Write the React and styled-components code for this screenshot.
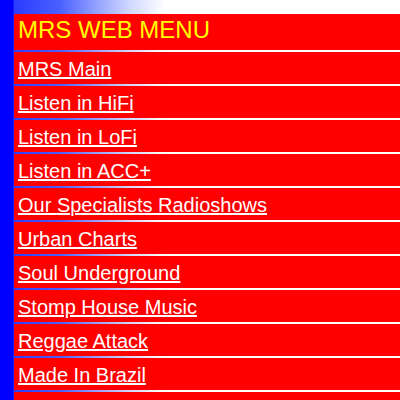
import React from "react";
import styled, { createGlobalStyle } from "styled-components";

const GlobalStyle = createGlobalStyle`
  html, body {
    margin: 0;
    padding: 0;
    overflow: hidden;
  }
  body {
    font-family: "Liberation Sans", Arial, sans-serif;
    background: linear-gradient(
      90deg,
      #0000ff 0,
      #0000ff 13px,
      #2a3cff 14px,
      #4a60ff 60px,
      #9aa8ff 100px,
      #d0d8ff 130px,
      #ffffff 165px
    );
    min-height: 100vh;
  }
`

const Page = styled.div`
  padding: 12px 0 0 12px;
`

const Menu = styled.nav`
  display: flex;
  flex-direction: column;
  gap: 2px;
  padding: 2px;
  width: 600px;
`

const Header = styled.div`
  display: flex;
  align-items: center;
  height: 36px;
  padding: 0 4px 4px 4px;
  box-sizing: border-box;
  background: #ff0000;
  color: #ffff00;
  font-size: 24px;
`

const Item = styled.div`
  display: flex;
  align-items: center;
  height: 32px;
  padding: 2px 4px 0 4px;
  box-sizing: border-box;
  background: #ff0000;
`

const MenuLink = styled.a`
  color: #ffffff;
  font-size: 20px;
  text-decoration: underline;
`

const links = [
  "MRS Main",
  "Listen in HiFi",
  "Listen in LoFi",
  "Listen in ACC+",
  "Our Specialists Radioshows",
  "Urban Charts",
  "Soul Underground",
  "Stomp House Music",
  "Reggae Attack",
  "Made In Brazil",
  "Latin Grooves",
]

function App() {
  return (
    <Page>
      <GlobalStyle />
      <Menu>
        <Header>MRS WEB MENU</Header>
        {links.map((label) => (
          <Item key={label}>
            <MenuLink href="#">{label}</MenuLink>
          </Item>
        ))}
      </Menu>
    </Page>
  );
}

export default App;
